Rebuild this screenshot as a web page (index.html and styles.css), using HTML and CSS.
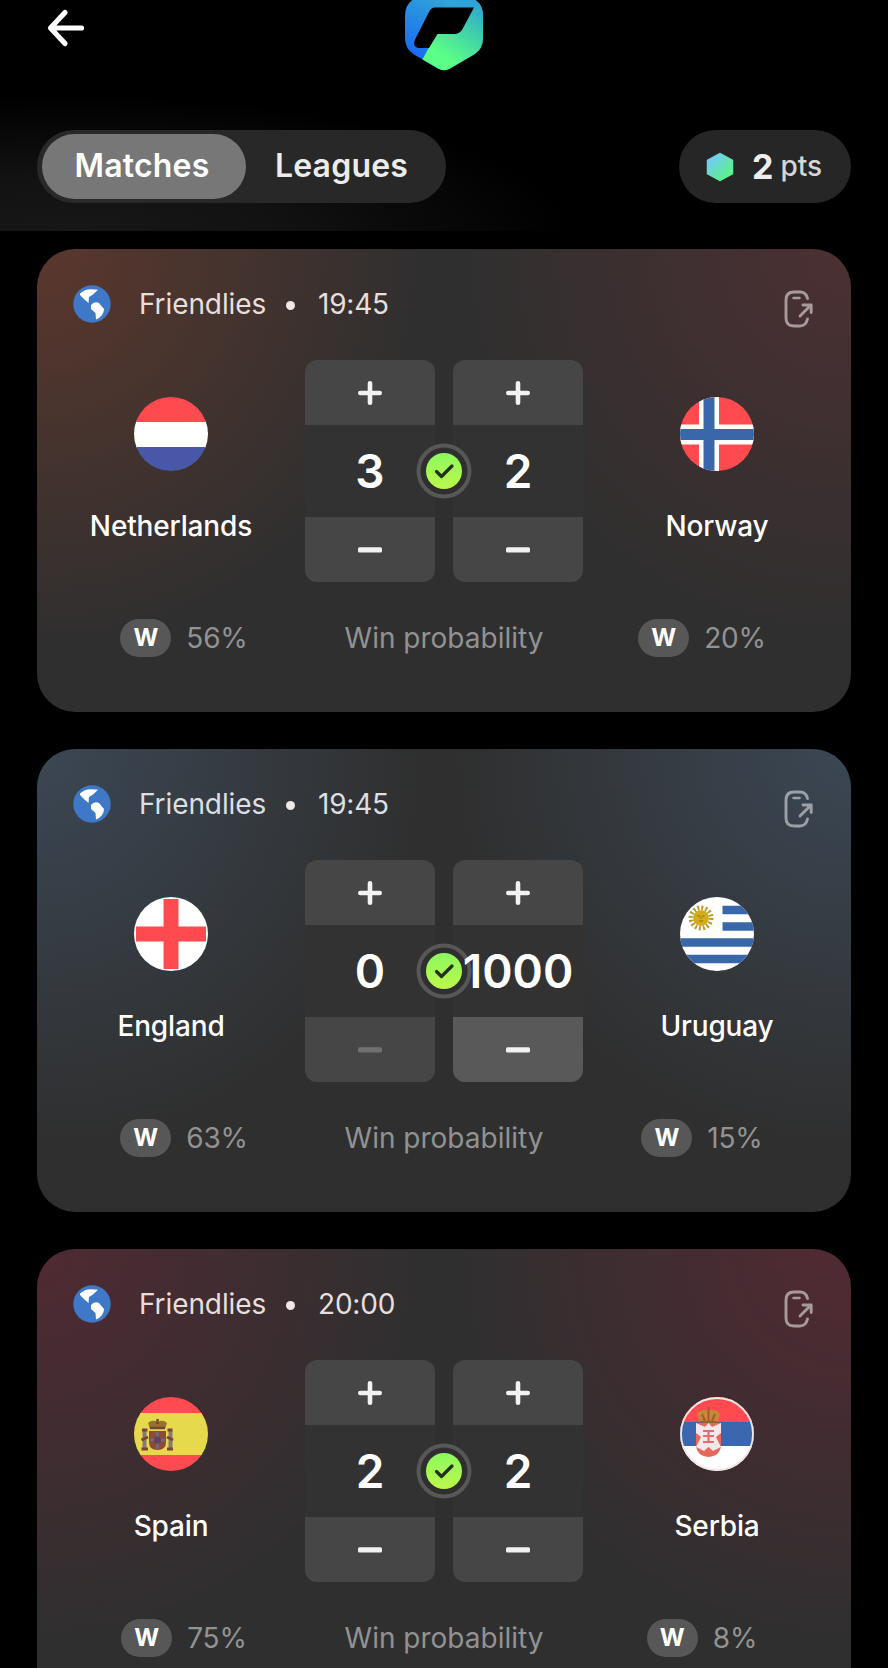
FILE: index.html
```html
<!DOCTYPE html>
<html lang="en">
<head>
<meta charset="utf-8">
<title>Matches</title>
<link rel="stylesheet" href="styles.css">
</head>
<body>
<svg class="defs" width="0" height="0" aria-hidden="true">
  <defs>
    <linearGradient id="limeFill" x1="0" y1="0" x2="0" y2="1"><stop offset="0" stop-color="#8cf85f"/><stop offset="1" stop-color="#bdf84a"/></linearGradient>
    <clipPath id="round"><circle cx="37" cy="37" r="37"/></clipPath>
    <symbol id="globe" viewBox="0 0 38 38">
      <circle cx="19" cy="19" r="18.700" fill="#3f78c6"/>
      <path d="M7 8.500Q12 4 18 4.200L25 4.800L20 9.500L16 12L15.500 18L12 15L7 10Z" fill="#fff"/>
      <path d="M18 20Q21 16 26 18L31 24Q31 31 23 34.500L22.500 28L18 24Z" fill="#fff"/>
    </symbol>
    <symbol id="share" viewBox="0 0 30 38">
      <g fill="none" stroke="currentColor" stroke-width="2.900" stroke-linecap="round" stroke-linejoin="round">
        <path d="M23.500 8.500C22.600 4.500 20 2 16 2H10C4.500 2 2 5 2 10V28C2 33 4.500 36 10 36H16C20 36 22.600 33 23.500 29"/>
        <path d="M9.500 8H15.500" stroke-width="2.500"/><path d="M16 26L27 15M19 15H27.200V22.500"/>
      </g>
    </symbol>
    <symbol id="plus" viewBox="0 0 24 24"><path d="M12 2.300V21.700M2.300 12H21.700" stroke="currentColor" stroke-width="4.600" stroke-linecap="round"/></symbol>
    <symbol id="minus" viewBox="0 0 24 24"><rect y="9.200" width="24" height="5.400" rx="1.500" fill="currentColor"/></symbol>
    <symbol id="check" viewBox="0 0 56 56">
      <circle cx="28" cy="28" r="25.500" fill="#2f2f2f" stroke="#575757" stroke-width="4"/>
      <circle cx="28" cy="28" r="18" fill="url(#limeFill)"/>
      <path d="M20.500 28.500L25.500 33.500L36 23" fill="none" stroke="#22301c" stroke-width="3.200" stroke-linecap="round" stroke-linejoin="round"/>
    </symbol>
  </defs>
</svg>

<header class="header">
  <div class="topbar">
    <svg class="back" viewBox="0 0 40 40"><path d="M19 4.500L4.500 20L19 35.500M5 20H35.500" fill="none" stroke="#fff" stroke-width="5.200" stroke-linecap="round" stroke-linejoin="round"/></svg>
    <svg class="logo" viewBox="405 0 78 71">
      <defs>
        <linearGradient id="logoBlue" x1="0" y1="1" x2=".5" y2="0"><stop offset="0" stop-color="#135bfb"/><stop offset="1" stop-color="#30a3d8"/></linearGradient>
        <linearGradient id="logoGreen" x1=".25" y1="1" x2=".9" y2="0"><stop offset=".22" stop-color="#5bff87"/><stop offset=".6" stop-color="#43d5a5"/><stop offset="1" stop-color="#2ca3d5"/></linearGradient>
        <clipPath id="logoHex"><path d="M438 68.500L414 54.500Q405 49 405 38V16Q405 4 414 -1L444 -17L474 -1Q483 4 483 16V38Q483 49 474 54.500L450 68.500Q444 72 438 68.500Z"/></clipPath>
      </defs>
      <g clip-path="url(#logoHex)">
        <path d="M405 0H483V71H405Z" fill="url(#logoBlue)"/>
        <path d="M473.500 7.500L483 0V71H416L437 33L458 20Z" fill="url(#logoGreen)"/>
        <path d="M435 7.500H474L462.500 29Q460 34 454 34H437.500L429 48H418Q412 46 415 39.500L429 12Q431 7.500 435 7.500Z" fill="#000"/>
      </g>
    </svg>
  </div>
  <div class="controls">
    <nav class="tabs"><a class="tab tab-active">Matches</a><a class="tab">Leagues</a></nav>
    <div class="points">
      <svg class="gem" viewBox="0 0 28 30"><defs><linearGradient id="gemFill" x1=".1" y1=".2" x2=".7" y2=".9"><stop offset="0" stop-color="#71cdf0"/><stop offset="1" stop-color="#5df08e"/></linearGradient></defs><path d="M14 2L26 8.500V21.500L14 28L2 21.500V8.500Z" fill="url(#gemFill)" stroke="url(#gemFill)" stroke-width="2.500" stroke-linejoin="round"/></svg>
      <b>2</b><span>pts</span>
    </div>
  </div>
</header>

<main class="list">
  <article class="card card-orange">
    <div class="meta"><svg class="globe"><use href="#globe"/></svg><span class="league">Friendlies</span><i class="dot"></i><span class="time">19:45</span><svg class="share"><use href="#share"/></svg></div>
    <div class="match">
      <div class="team">
        <svg class="flag" viewBox="0 0 74 74"><g clip-path="url(#round)"><path d="M0 24H74V51H0Z" fill="#fff"/><path d="M0 0H74V25H0Z" fill="#ff4b50"/><path d="M0 50H74V74H0Z" fill="#4857a7"/></g></svg>
        <span class="name">Netherlands</span>
      </div>
      <div class="score">
        <div class="stepper"><button class="step"><svg><use href="#plus"/></svg></button><output>3</output><button class="step"><svg><use href="#minus"/></svg></button></div>
        <div class="stepper"><button class="step"><svg><use href="#plus"/></svg></button><output>2</output><button class="step"><svg><use href="#minus"/></svg></button></div>
        <svg class="check"><use href="#check"/></svg>
      </div>
      <div class="team">
        <svg class="flag" viewBox="0 0 74 74"><g clip-path="url(#round)"><path d="M0 0H74V74H0Z" fill="#ff4b50"/><path d="M29 0V74M0 37.500H74" stroke="#fff" stroke-width="20"/><path d="M29 0V74M0 37.500H74" stroke="#3a67a9" stroke-width="11"/></g></svg>
        <span class="name">Norway</span>
      </div>
    </div>
    <div class="odds"><div class="chance"><b>W</b><span>56%</span></div><span class="caption">Win probability</span><div class="chance"><b>W</b><span>20%</span></div></div>
  </article>

  <article class="card card-blue">
    <div class="meta"><svg class="globe"><use href="#globe"/></svg><span class="league">Friendlies</span><i class="dot"></i><span class="time">19:45</span><svg class="share"><use href="#share"/></svg></div>
    <div class="match">
      <div class="team">
        <svg class="flag" viewBox="0 0 74 74"><circle cx="37" cy="37" r="37" fill="#fff"/><path d="M37 2V72M2 37H72" stroke="#ff4b50" stroke-width="15"/></svg>
        <span class="name">England</span>
      </div>
      <div class="score">
        <div class="stepper"><button class="step"><svg><use href="#plus"/></svg></button><output>0</output><button class="step step-disabled"><svg><use href="#minus"/></svg></button></div>
        <div class="stepper"><button class="step"><svg><use href="#plus"/></svg></button><output>1000</output><button class="step step-pressed"><svg><use href="#minus"/></svg></button></div>
        <svg class="check"><use href="#check"/></svg>
      </div>
      <div class="team">
        <svg class="flag" viewBox="0 0 74 74"><g clip-path="url(#round)"><path d="M0 0H74V74H0Z" fill="#fff"/><path d="M42.500 13H74M42.500 29.500H74M0 45.500H74M0 62H74" stroke="#3a67a9" stroke-width="8.600"/><circle cx="21" cy="21" r="10" fill="none" stroke="#b99a2f" stroke-width="5" stroke-dasharray="1.900 2.030"/><circle cx="21" cy="21" r="7.800" fill="#d3ac16"/><path d="M17.500 19H20M22 19H24.500M21 20V22M19 24H23" stroke="#8d7414" stroke-width="1"/></g></svg>
        <span class="name">Uruguay</span>
      </div>
    </div>
    <div class="odds"><div class="chance"><b>W</b><span>63%</span></div><span class="caption">Win probability</span><div class="chance"><b>W</b><span>15%</span></div></div>
  </article>

  <article class="card card-red">
    <div class="meta"><svg class="globe"><use href="#globe"/></svg><span class="league">Friendlies</span><i class="dot"></i><span class="time">20:00</span><svg class="share"><use href="#share"/></svg></div>
    <div class="match">
      <div class="team">
        <svg class="flag" viewBox="0 0 74 74"><g clip-path="url(#round)"><path d="M0 0H74V17H0ZM0 57H74V74H0Z" fill="#ff4b50"/><path d="M0 16H74V58H0Z" fill="#e6da4c"/>
          <path d="M10.500 34V52M36.500 34V52" stroke="#8a7771" stroke-width="4"/><path d="M8 33H13.500M33.500 33H38.500M7.500 52H14M33 52H39M7.500 43L14 40M33 40L39 43" stroke="#79443a" stroke-width="3"/>
          <path d="M15 34H32V45Q32 53 23.500 53Q15 53 15 45Z" fill="#8b4a3d"/><path d="M23.500 35V52M16 43H31" stroke="#77696b" stroke-width="3"/><circle cx="23.500" cy="43" r="3.500" fill="#5d4168"/><path d="M16 32L14 26Q18 22 23.500 25Q29 22 33 26L31 32Z" fill="#98702f"/><path d="M16 31H31M23.500 22V27" stroke="#6e4830" stroke-width="2.500"/></g></svg>
        <span class="name">Spain</span>
      </div>
      <div class="score">
        <div class="stepper"><button class="step"><svg><use href="#plus"/></svg></button><output>2</output><button class="step"><svg><use href="#minus"/></svg></button></div>
        <div class="stepper"><button class="step"><svg><use href="#plus"/></svg></button><output>2</output><button class="step"><svg><use href="#minus"/></svg></button></div>
        <svg class="check"><use href="#check"/></svg>
      </div>
      <div class="team">
        <svg class="flag" viewBox="0 0 74 74"><g clip-path="url(#round)"><path d="M0 0H74V74H0Z" fill="#fff"/><path d="M0 0H74V25H0Z" fill="#ff4b50"/><path d="M0 25H74V49H0Z" fill="#3a67ad"/>
          <path d="M16 26H41V47Q41 59 28.500 60Q16 59 16 47Z" fill="#e6685a"/><path d="M16 26L25 30L28.500 26L32 30L41 26V36L36 40L41 50L33 54L28.500 50L24 54L16 50L21 40L16 36Z" fill="#f6e8ea"/><path d="M23 34H34M23 39H34M28.500 33V45M23 45H34" stroke="#e66c6f" stroke-width="2.200"/><path d="M20 26L17 17Q22 11 28.500 14Q35 11 40 17L37 26Z" fill="#c48a38"/><path d="M22 17L25 24M35 17L32 24M28.500 10V24M20 25H37" stroke="#a25b32" stroke-width="2"/></g><circle cx="37" cy="37" r="36" fill="none" stroke="#f3e6e8" stroke-width="1.800"/></svg>
        <span class="name">Serbia</span>
      </div>
    </div>
    <div class="odds"><div class="chance"><b>W</b><span>75%</span></div><span class="caption">Win probability</span><div class="chance"><b>W</b><span>8%</span></div></div>
  </article>
</main>
</body>
</html>
```
FILE: styles.css
```css
* { box-sizing: border-box; }
html { background: #000; }
body {
  margin: 0;
  height: 1668px;
  overflow: hidden;
  background: #000;
  color: #fff;
  font-family: Inter, "Liberation Sans", sans-serif;
}
svg { display: block; flex: none; }
.defs { position: absolute; }

.header {
  height: 231px;
  background: radial-gradient(ellipse 500px 135px at 8% 100%, #171717 0%, #121212 40%, #000 100%);
}
.topbar {
  height: 130px;
  display: grid;
  grid-template-columns: 1fr 78px 1fr;
  align-items: start;
}
.back { width: 40px; height: 40px; margin: 7.5px 0 0 45.5px; }
.logo { width: 78px; height: 71px; }
.controls {
  display: flex;
  justify-content: space-between;
  padding: 0 37px;
}
.tabs {
  display: flex;
  width: 409px;
  height: 73px;
  padding: 4px 4px 4px 5px;
  border-radius: 37px;
  background: #282828;
}
.tab {
  width: 204px;
  height: 65px;
  line-height: 64px;
  padding-right: 4px;
  text-align: center;
  font-size: 32px;
  font-weight: 600;
  letter-spacing: .2px;
  color: #ececec;
  border-radius: 33px;
}
.tab + .tab { width: 192px; padding-right: 1px; }
.tab-active { background: #777; color: #fff; }
.points {
  display: flex;
  align-items: center;
  width: 172px;
  height: 73px;
  padding-left: 27px;
  border-radius: 37px;
  background: #262626;
  color: #eee;
}
.gem { width: 28px; height: 30px; margin-right: 18px; }
.points b { font-size: 34px; font-weight: 700; margin-right: 7px; line-height: 71px; }
.points span { font-size: 28px; font-weight: 500; line-height: 71px; color: #d6d6d6; }

.list {
  display: flex;
  flex-direction: column;
  gap: 37px;
  padding: 18px 37px 0;
}
.card {
  height: 463px;
  flex: none;
  border-radius: 38px;
  background:
    radial-gradient(ellipse 390px 400px at 0 0, var(--left) 0%, transparent 100%),
    radial-gradient(ellipse 400px 400px at 100% 0, var(--right) 0%, transparent 100%),
    #2f2f2f;
}
.card-orange { --left: #5b372d; --right: #4c3032; }
.card-blue { --left: #3b4754; --right: #3b4754; --icon: #9ba0a6; }
.card-red { --left: #502a33; --right: #522a33; }

.meta {
  display: flex;
  align-items: center;
  height: 110px;
  padding: 0 36px;
  font-size: 28px;
  color: #e6dfdd;
}
.card-blue .meta { color: #dcdfe3; }
.globe { width: 38px; height: 38px; }
.league { margin-left: 28px; width: 127px; letter-spacing: -.1px; }
.dot { width: 9px; height: 9px; margin: 2px 23px 0 20px; border-radius: 50%; background: #f0e8e6; }
.time { letter-spacing: -.2px; }
.share { width: 30px; height: 38px; margin: 10px 1px 0 auto; color: var(--icon, #a79a9a); }

.match { display: grid; grid-template-columns: 268px 278px 268px; height: 223px; padding-top: 1px; }
.team { display: flex; flex-direction: column; align-items: center; padding-top: 37px; }
.flag { width: 74px; height: 74px; }
.name { margin-top: 36px; font-size: 28px; line-height: 38px; font-weight: 500; letter-spacing: -.15px; }
.score { position: relative; display: flex; gap: 18px; }
.stepper {
  display: flex;
  flex-direction: column;
  width: 130px;
  height: 222px;
  border-radius: 12px;
  overflow: hidden;
  background: #323232;
}
.step {
  display: flex;
  align-items: center;
  justify-content: center;
  height: 65px;
  flex: none;
  padding: 0;
  border: 0;
  color: #f2f2f2;
  background: #464646;
}
.step svg { width: 24px; height: 24px; }
.step-disabled { color: #707070; }
.step-pressed { background: #595959; }
.stepper output {
  display: flex;
  flex: 1;
  align-items: center;
  justify-content: center;
  font-size: 46px;
  font-weight: 600;
}
.check { position: absolute; left: 111px; top: 83px; width: 56px; height: 56px; }
.stepper:nth-child(2) output { position: relative; z-index: 1; }

.odds {
  display: grid;
  grid-template-columns: 294px 1fr 298px;
  align-items: center;
  height: 38px;
  margin-top: 37px;
  font-size: 28px;
  color: #929292;
}
.chance { display: flex; align-items: center; justify-content: center; gap: 15px; }
.chance span { letter-spacing: -.2px; }
.chance b {
  width: 51px;
  height: 38px;
  line-height: 38px;
  text-align: center;
  border-radius: 19px;
  font-size: 24px;
  font-weight: 700;
  color: #fff;
  background: #575757;
}
.caption { padding-left: 4px; text-align: center; white-space: nowrap; }
```
